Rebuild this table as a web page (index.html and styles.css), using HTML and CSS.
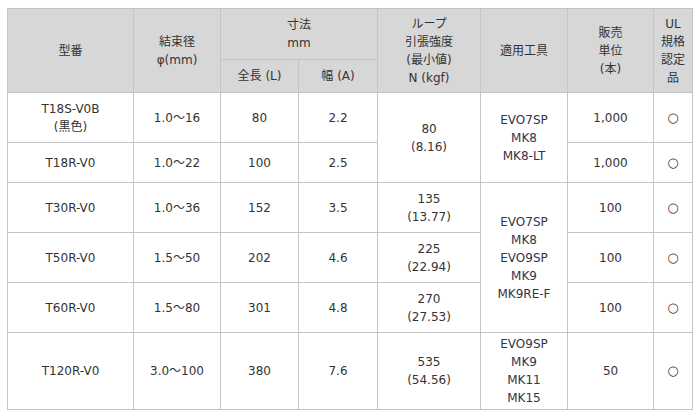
FILE: index.html
```html
<!DOCTYPE html>
<html lang="ja">
<head>
<meta charset="utf-8">
<link rel="stylesheet" href="styles.css">
</head>
<body>
<table class="spec">
  <colgroup>
    <col class="c-model"><col class="c-dia"><col class="c-len"><col class="c-wid">
    <col class="c-loop"><col class="c-tool"><col class="c-unit"><col class="c-ul">
  </colgroup>
  <thead>
    <tr class="h1">
      <th rowspan="2">型番</th>
      <th rowspan="2">結束径<br>φ(mm)</th>
      <th colspan="2">寸法<br>mm</th>
      <th rowspan="2">ループ<br>引張強度<br>(最小値)<br>N (kgf)</th>
      <th rowspan="2">適用工具</th>
      <th rowspan="2">販売<br>単位<br>(本)</th>
      <th rowspan="2">UL<br>規格<br>認定<br>品</th>
    </tr>
    <tr class="h2">
      <th>全長 (L)</th>
      <th>幅 (A)</th>
    </tr>
  </thead>
  <tbody>
    <tr class="r50">
      <td>T18S-V0B<br>(黒色)</td>
      <td>1.0～16</td>
      <td>80</td>
      <td>2.2</td>
      <td rowspan="2">80<br>(8.16)</td>
      <td rowspan="2" class="tool">EVO7SP<br>MK8<br>MK8-LT</td>
      <td>1,000</td>
      <td class="ok">○</td>
    </tr>
    <tr class="r40">
      <td>T18R-V0</td>
      <td>1.0～22</td>
      <td>100</td>
      <td>2.5</td>
      <td>1,000</td>
      <td class="ok">○</td>
    </tr>
    <tr class="r50">
      <td>T30R-V0</td>
      <td>1.0～36</td>
      <td>152</td>
      <td>3.5</td>
      <td>135<br>(13.77)</td>
      <td rowspan="3" class="tool">EVO7SP<br>MK8<br>EVO9SP<br>MK9<br>MK9RE-F</td>
      <td>100</td>
      <td class="ok">○</td>
    </tr>
    <tr class="r50">
      <td>T50R-V0</td>
      <td>1.5～50</td>
      <td>202</td>
      <td>4.6</td>
      <td>225<br>(22.94)</td>
      <td>100</td>
      <td class="ok">○</td>
    </tr>
    <tr class="r50">
      <td>T60R-V0</td>
      <td>1.5～80</td>
      <td>301</td>
      <td>4.8</td>
      <td>270<br>(27.53)</td>
      <td>100</td>
      <td class="ok">○</td>
    </tr>
    <tr class="r77">
      <td>T120R-V0</td>
      <td>3.0～100</td>
      <td>380</td>
      <td>7.6</td>
      <td>535<br>(54.56)</td>
      <td class="tool">EVO9SP<br>MK9<br>MK11<br>MK15</td>
      <td>50</td>
      <td class="ok">○</td>
    </tr>
  </tbody>
</table>
</body>
</html>
```

FILE: styles.css
```css
html, body {
  margin: 0;
  background: #fff;
}
body {
  padding: 8px 8px 0 7px;
  font-family: "DejaVu Sans", "Noto Sans CJK JP", sans-serif;
  font-size: 12px;
  line-height: 18px;
  color: #333;
}
.spec {
  width: 685px;
  table-layout: fixed;
  border-collapse: collapse;
}
.c-model { width: 126px; }
.c-dia { width: 87px; }
.c-len { width: 78px; }
.c-wid { width: 79px; }
.c-loop { width: 103px; }
.c-tool { width: 87px; }
.c-unit { width: 86px; }
.c-ul { width: 39px; }
.spec th,
.spec td {
  border: 1px solid #c4c4c4;
  padding: 0;
  text-align: center;
  vertical-align: middle;
}
.spec th {
  background: #d7d7d7;
  font-weight: normal;
}
.h1 { height: 51px; }
.h2 { height: 33px; }
.r50 { height: 50px; }
.r40 { height: 40px; }
.r77 { height: 77px; }
.tool { color: #33334d; }
.ok { font-size: 13px; }
```
